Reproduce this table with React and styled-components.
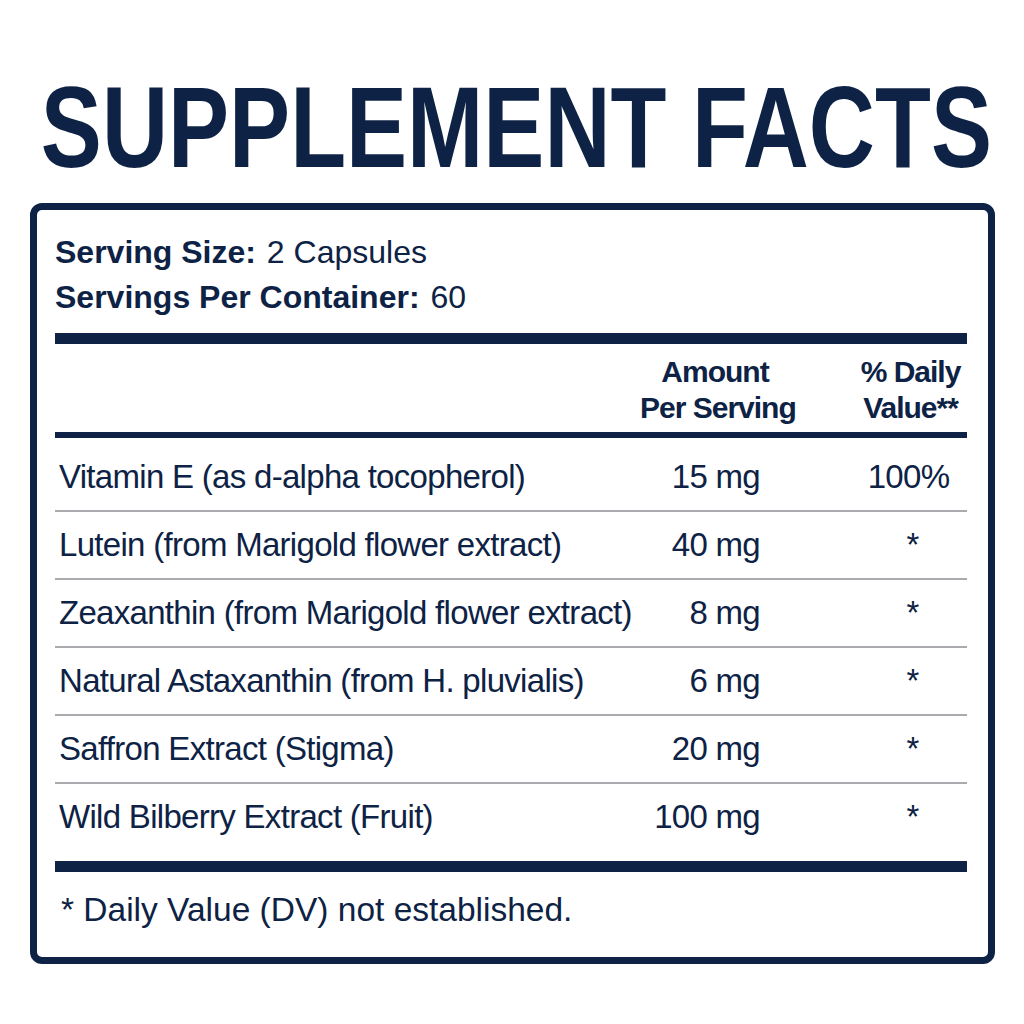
import React from 'react';
import styled, { createGlobalStyle } from 'styled-components';

const NAVY = '#0d2244';

const GlobalStyle = createGlobalStyle`
  body {
    margin: 0;
    background: #ffffff;
    font-family: 'Liberation Sans', Arial, sans-serif;
    color: ${NAVY};
  }
`;

const Page = styled.div`
  width: 1024px;
  height: 1024px;
  background: #fff;
  overflow: hidden;
`;

const TitleRow = styled.div`
  display: flex;
  justify-content: center;
  padding: 70px 0 0 8px;
  height: 115px;
  overflow: visible;
`;

const Title = styled.h1`
  flex: none;
  margin: 0;
  font-size: 115px;
  line-height: 115px;
  font-weight: 700;
  white-space: nowrap;
  color: ${NAVY};
  transform: scaleX(0.796);
  transform-origin: 50% 50%;
`;

const Panel = styled.div`
  box-sizing: border-box;
  width: 965px;
  margin: 18px 0 0 30px;
  border: 7px solid ${NAVY};
  border-radius: 12px;
  padding: 20px 21px 28px 18px;
`;

const ServingLine = styled.div`
  font-size: 32px;
  line-height: 45px;
  white-space: nowrap;

  b {
    font-weight: 700;
    margin-right: 2px;
  }
`;

const Rule = styled.div`
  height: ${(p) => p.$thick}px;
  background: ${NAVY};
  margin-top: ${(p) => p.$top || 0}px;
`;

const Grid = styled.div`
  display: grid;
  grid-template-columns: 1fr 210px 117px;
  align-items: center;
`;

const HeadRow = styled(Grid)`
  padding: 10px 0 6px;
  font-weight: 700;
  font-size: 30px;
  line-height: 36px;
  letter-spacing: -1px;
`;

const HeadAmount = styled.div`
  grid-column: 2;
  text-align: center;
  padding-right: 60px;
  white-space: nowrap;
`;

const HeadDv = styled.div`
  grid-column: 3;
  text-align: center;
  padding-left: 4px;
  white-space: nowrap;
`;

const Body = styled.div`
  padding-top: 6px;
`;

const Row = styled(Grid)`
  height: 66px;
  border-bottom: ${(p) => (p.$last ? 'none' : '2px solid #a9abae')};
  font-size: 33px;
  letter-spacing: -0.7px;
  white-space: nowrap;
`;

const Name = styled.div`
  padding-left: 4px;
`;

const Amount = styled.div`
  text-align: right;
  padding-right: 90px;
`;

const Dv = styled.div`
  text-align: center;
  padding-left: ${(p) => (p.$star ? 8 : 0)}px;
`;

const Footnote = styled.p`
  margin: 19px 0 0 6px;
  font-size: 33.5px;
  white-space: nowrap;
`;

const ingredients = [
  { name: 'Vitamin E (as d-alpha tocopherol)', amount: '15 mg', dv: '100%' },
  { name: 'Lutein (from Marigold flower extract)', amount: '40 mg', dv: '*' },
  { name: 'Zeaxanthin (from Marigold flower extract)', amount: '8 mg', dv: '*' },
  { name: 'Natural Astaxanthin (from H. pluvialis)', amount: '6 mg', dv: '*' },
  { name: 'Saffron Extract (Stigma)', amount: '20 mg', dv: '*' },
  { name: 'Wild Bilberry Extract (Fruit)', amount: '100 mg', dv: '*' },
];

const App = () => (
  <Page>
    <GlobalStyle />
    <TitleRow>
      <Title>SUPPLEMENT FACTS</Title>
    </TitleRow>
    <Panel>
      <ServingLine>
        <b>Serving Size:</b> 2 Capsules
      </ServingLine>
      <ServingLine>
        <b>Servings Per Container:</b> 60
      </ServingLine>
      <Rule $thick={11} $top={13} />
      <HeadRow>
        <HeadAmount>
          Amount
          <br />
          Per Serving
        </HeadAmount>
        <HeadDv>
          % Daily
          <br />
          Value**
        </HeadDv>
      </HeadRow>
      <Rule $thick={6} />
      <Body>
        {ingredients.map((item, i) => (
          <Row key={item.name} $last={i === ingredients.length - 1}>
            <Name>{item.name}</Name>
            <Amount>{item.amount}</Amount>
            <Dv $star={item.dv === '*'}>{item.dv}</Dv>
          </Row>
        ))}
      </Body>
      <Rule $thick={11} $top={11} />
      <Footnote>* Daily Value (DV) not established.</Footnote>
    </Panel>
  </Page>
);

export default App;
